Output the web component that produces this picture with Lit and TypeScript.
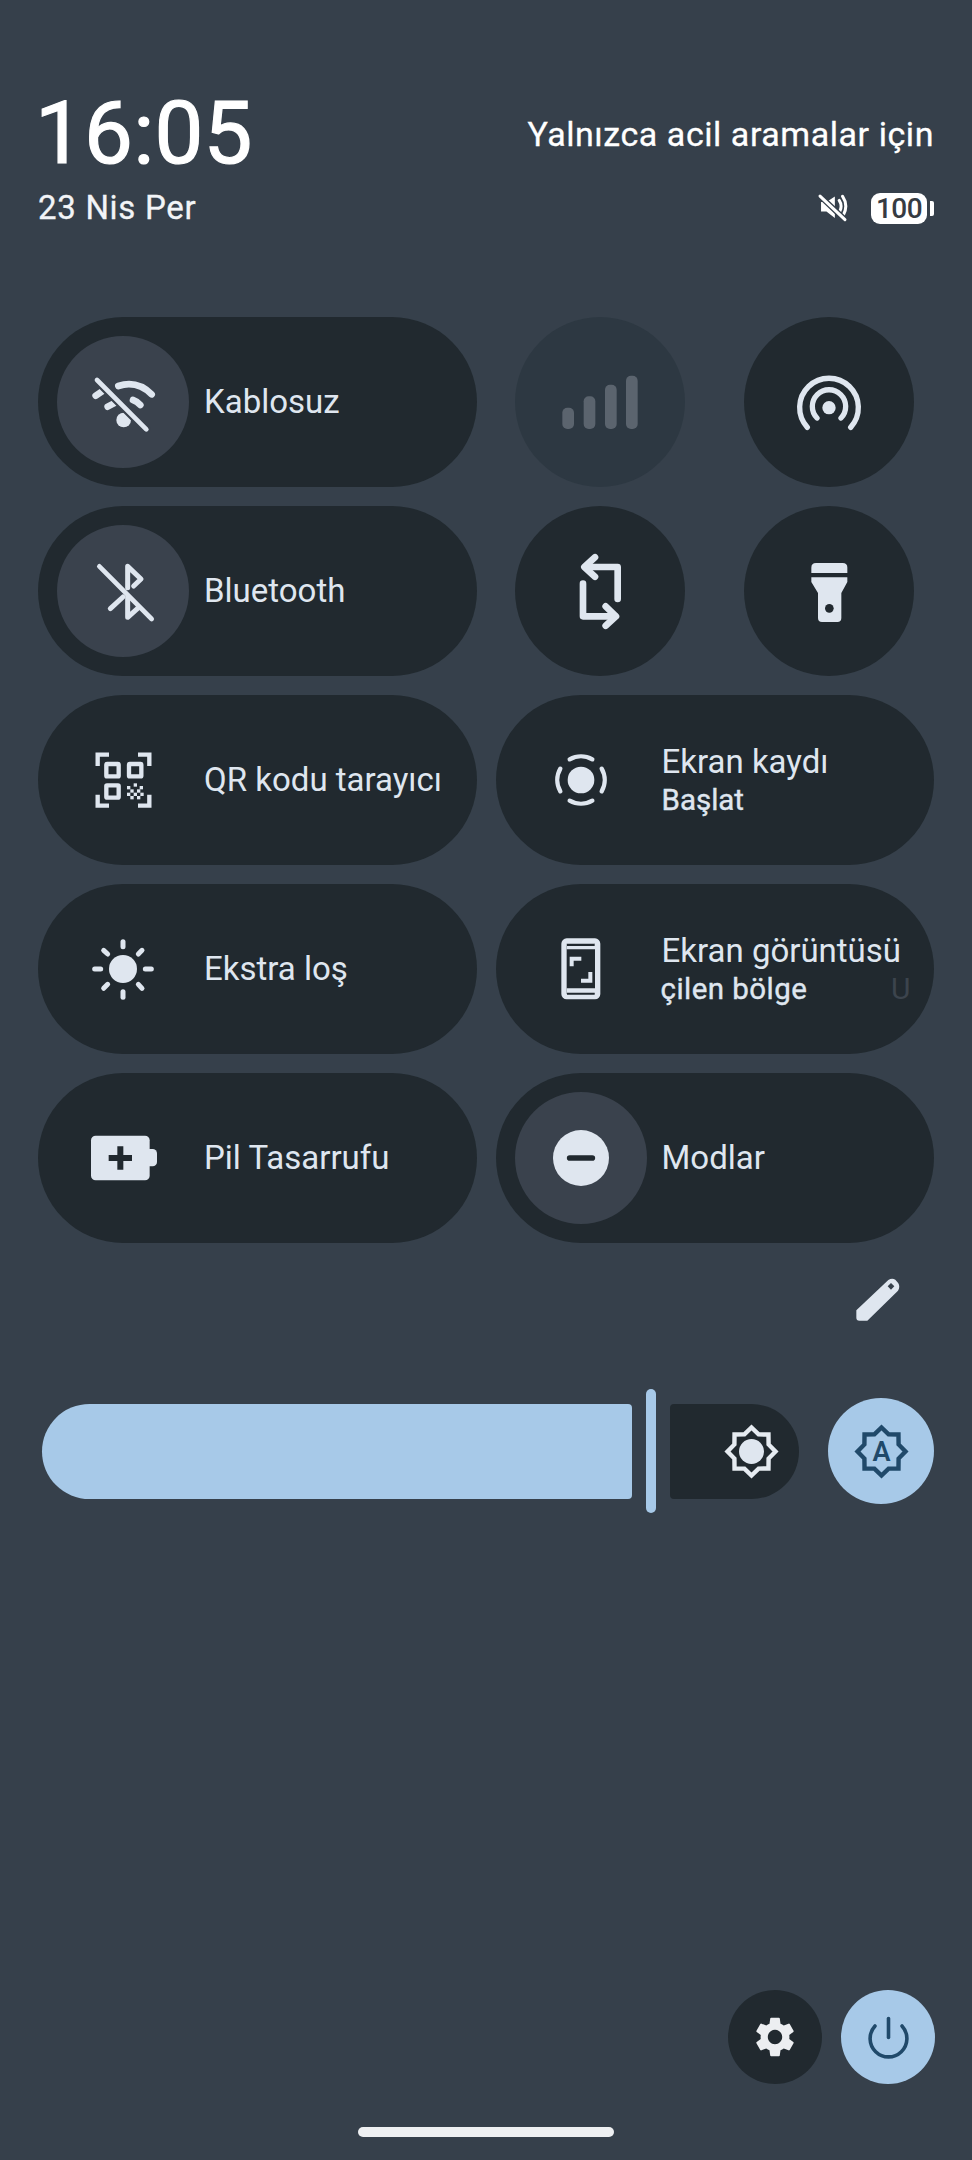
import { LitElement, html, svg, css } from 'lit';
import { customElement } from 'lit/decorators.js';

const FG = '#dfe6ef';
const TILE = '#21292f';
const RING = '#3a424d';
const NAVY = '#20496a';

// 8 pointed star outline used by the brightness icons
const starPoints = (() => {
  const pts: string[] = [];
  for (let i = 0; i < 16; i++) {
    const r = i % 2 === 0 ? 24 : 18.5;
    const a = (i * Math.PI) / 8;
    pts.push(`${(28.5 + r * Math.sin(a)).toFixed(2)},${(28.5 - r * Math.cos(a)).toFixed(2)}`);
  }
  return pts.join(' ');
})();

const glyph = (vb: string, body: unknown) => html`<svg class="ico" viewBox=${vb} fill="none" stroke-linecap="round" stroke-linejoin="round">${body}</svg>`;

const icons = {
  wifiOff: glyph('218 216 180 180', svg`
    <g stroke=${FG} stroke-width="20">
      <path d="M294 258Q350 240 394 283" /><path d="M226 287L248 272" /><path d="M262 320L285 308" /><path d="M338 300Q350 304 360 315" />
    </g>
    <circle cx="310" cy="360" r="22" fill=${FG} />
    <path d="M230 240L378 388" stroke=${RING} stroke-width="27" />
    <path d="M230 240L378 388" stroke=${FG} stroke-width="14" />`),
  btOff: glyph('218 782 180 180', svg`
    <g stroke=${FG} stroke-width="15">
      <path d="M322 862V798L362 836L340 857" /><path d="M270 925L308 890" /><path d="M322 890V951L352 924" />
    </g>
    <path d="M237 798L394 956" stroke=${FG} stroke-width="14" />`),
  signal: glyph('243 215 180 180', svg`
    <g fill="#5b646e">
      <rect x="220" y="322" width="35" height="64" rx="15" /><rect x="284" y="288" width="35" height="98" rx="15" />
      <rect x="348" y="253" width="35" height="133" rx="15" /><rect x="411" y="226" width="35" height="160" rx="15" />
    </g>`),
  hotspot: glyph('928 215 180 180', svg`
    <circle cx="1018" cy="322" r="20" fill=${FG} />
    <g stroke=${FG} stroke-width="16">
      <path d="M982 353A50 50 0 1 1 1054 353" /><path d="M953 381A88 88 0 1 1 1083 381" />
    </g>`),
  rotate: glyph('243 782 180 180', svg`
    <g stroke=${FG} stroke-width="20">
      <path d="M318 771L286 800L318 829" /><path d="M290 800H386V896" />
      <path d="M282 850V948H378" /><path d="M350 918L381 948L350 976" />
    </g>`),
  torch: glyph('928 782 180 180', svg`
    <path d="M965 818V802Q965 788 979 788H1059Q1073 788 1073 802V818Z" fill=${FG} />
    <path d="M965 831H1073V845L1055 878V953Q1055 965 1043 965H997Q985 965 985 953V878L965 845Z" fill=${FG} />
    <circle cx="1019" cy="924" r="13" fill=${TILE} />`),
  qr: glyph('218 210 180 180', svg`
    <g stroke=${FG} stroke-width="13" stroke-linecap="butt" stroke-linejoin="miter">
      <path d="M232 258V224H266" /><path d="M353 224H387V258" /><path d="M232 344V377H266" /><path d="M387 344V377H353" />
      <rect x="258" y="252" width="37" height="37" rx="2" /><rect x="326" y="252" width="37" height="37" rx="2" /><rect x="258" y="316" width="37" height="37" rx="2" />
    </g>
    <g fill=${FG}>
      <rect x="320" y="318" width="10" height="10" /><rect x="340" y="310" width="10" height="10" /><rect x="358" y="318" width="10" height="10" />
      <rect x="330" y="328" width="10" height="10" /><rect x="350" y="328" width="10" height="10" /><rect x="320" y="338" width="10" height="10" />
      <rect x="340" y="338" width="10" height="10" /><rect x="360" y="338" width="10" height="10" /><rect x="330" y="348" width="10" height="10" /><rect x="350" y="348" width="10" height="10" />
    </g>`),
  dim: glyph('220 777 180 180', svg`
    <circle cx="310" cy="867" r="42" fill=${FG} />
    <g stroke=${FG} stroke-width="15">
      <path d="M310 785V800" /><path d="M310 935V952" /><path d="M225 867H243" /><path d="M377 867H395" />
      <path d="M252 811L264 822" /><path d="M367 811L356 822" /><path d="M252 925L264 913" /><path d="M367 925L356 913" />
    </g>`),
  record: glyph('184 210 180 180', svg`
    <circle cx="274" cy="300" r="40" fill=${FG} />
    <g stroke=${FG} stroke-width="13">
      <path d="M240 238A68 68 0 0 1 308 238" /><path d="M240 362A68 68 0 0 0 308 362" />
      <path d="M212 266A68 68 0 0 0 212 334" /><path d="M336 266A68 68 0 0 1 336 334" />
    </g>`),
  screenshot: glyph('184 777 180 180', svg`
    <rect x="223" y="783" width="101" height="167" rx="8" stroke=${FG} stroke-width="16" />
    <path d="M231 800H316M231 933H316" stroke=${FG} stroke-width="16" stroke-linecap="butt" />
    <path d="M232 795H315M232 941H315" stroke=${TILE} stroke-width="6" stroke-linecap="butt" />
    <g stroke=${FG} stroke-width="12" stroke-linecap="butt" stroke-linejoin="miter">
      <path d="M275 836H246V859" /><path d="M302 876V902H274" />
    </g>`),
  saver: glyph('218 205 180 180', svg`
    <rect x="375" y="268" width="35" height="52" rx="13" fill=${FG} />
    <rect x="212" y="228" width="176" height="134" rx="14" fill=${FG} />
    <path d="M265 295H335M300 260V330" stroke=${TILE} stroke-width="18" stroke-linecap="butt" />`),
  modes: glyph('184 204 180 180', svg`
    <circle cx="274" cy="294" r="84" fill=${FG} />
    <path d="M240 294H308" stroke=${TILE} stroke-width="17" />`),
};

type Tile = { label: string; sub?: string; ghost?: string; icon: unknown; ring?: boolean };

const row3: Tile = { label: 'QR kodu tarayıcı', icon: icons.qr };
const row3b: Tile = { label: 'Ekran kaydı', sub: 'Başlat', icon: icons.record };
const row4: Tile = { label: 'Ekstra loş', icon: icons.dim };
const row4b: Tile = { label: 'Ekran görüntüsü', sub: 'çilen bölge', ghost: 'U', icon: icons.screenshot };
const row5: Tile = { label: 'Pil Tasarrufu', icon: icons.saver };
const row5b: Tile = { label: 'Modlar', icon: icons.modes, ring: true };

@customElement('app-root')
export class AppRoot extends LitElement {
  static styles = css`
    :host {
      display: flex;
      flex-direction: column;
      box-sizing: border-box;
      width: 972px;
      height: 2160px;
      padding: 0 38px;
      background: #36404b;
      color: #dfe6ef;
      font-family: Roboto, "Noto Sans", sans-serif;
      overflow: hidden;
    }

    .header {
      height: 317px;
      display: flex;
      justify-content: space-between;
      color: #fff;
    }
    .clock {
      font-size: 87px;
      line-height: 87px;
      margin-top: 90px;
      margin-left: -3px;
      letter-spacing: 0.2px;
      -webkit-text-stroke: 1.2px currentColor;
    }
    .date {
      font-size: 33px;
      line-height: 40px;
      margin-top: 11px;
      letter-spacing: 0.7px;
      color: #f2f4f7;
      -webkit-text-stroke: 0.3px currentColor;
    }
    .status {
      display: flex;
      flex-direction: column;
      align-items: flex-end;
    }
    .carrier {
      font-size: 34px;
      line-height: 40px;
      margin-top: 114px;
      letter-spacing: 0.55px;
      -webkit-text-stroke: 0.3px currentColor;
    }
    .indicators {
      display: flex;
      align-items: center;
      gap: 22px;
      margin-top: 38px;
    }
    .mute { width: 32px; height: 32px; }
    .battery { display: flex; align-items: center; gap: 3px; }
    .battery-body {
      width: 56px;
      height: 31px;
      border-radius: 9px;
      background: #fff;
      color: #363b42;
      font-size: 28px;
      font-weight: 500;
      line-height: 31px;
      letter-spacing: -0.5px;
      text-align: center;
    }
    .battery-nub { width: 4px; height: 15px; background: #fff; border-radius: 0 2px 2px 0; }

    .grid {
      display: grid;
      grid-template-columns: repeat(4, 1fr);
      grid-auto-rows: 170px;
      gap: 19px;
    }
    .tile {
      grid-column: span 2;
      display: flex;
      align-items: center;
      padding: 0 23px 0 19px;
      border-radius: 85px;
      background: #21292f;
    }
    .ico-wrap {
      flex: none;
      width: 132px;
      height: 132px;
      border-radius: 50%;
      display: flex;
      align-items: center;
      justify-content: center;
    }
    .ico-wrap.ring { background: #3a424d; }
    .ico { width: 60px; height: 60px; overflow: visible; }
    .text { flex: 1; min-width: 0; margin-left: 15px; }
    .label { font-size: 33px; line-height: 40px; white-space: nowrap; }
    .sub {
      display: flex;
      justify-content: space-between;
      font-size: 29.5px;
      line-height: 36px;
      white-space: nowrap;
      -webkit-text-stroke: 0.4px currentColor;
    }
    .sub.marquee { margin-left: -1px; letter-spacing: 0.45px; }
    .ghost { color: #3c444d; font-size: 30px; -webkit-text-stroke: 0; }
    .round {
      justify-self: center;
      width: 170px;
      border-radius: 50%;
      background: #21292f;
      display: flex;
      align-items: center;
      justify-content: center;
    }
    .round.off { background: #2d3842; }

    .edit { display: flex; justify-content: flex-end; padding: 35px 34px 0 0; }
    .pencil { width: 44px; height: 44px; }

    .brightness {
      display: flex;
      align-items: center;
      height: 124px;
      margin-top: 67px;
      padding-left: 4px;
    }
    .fill {
      flex: 1;
      height: 95px;
      background: #a7c9e8;
      border-radius: 47.5px 4px 4px 47.5px;
    }
    .thumb { width: 10px; height: 124px; margin: 0 14px; border-radius: 5px; background: #a7c9e8; }
    .rest {
      width: 129px;
      height: 95px;
      box-sizing: border-box;
      padding-right: 19px;
      display: flex;
      align-items: center;
      justify-content: flex-end;
      border-radius: 4px 47.5px 47.5px 4px;
      background: #21292f;
    }
    .star { width: 57px; height: 57px; }
    .auto {
      width: 106px;
      height: 106px;
      margin-left: 29px;
      border-radius: 50%;
      background: #a7c9e8;
      display: flex;
      align-items: center;
      justify-content: center;
    }
    .auto text { font-family: Roboto, sans-serif; font-size: 27px; font-weight: 600; }

    .footer { margin: auto -1px 0 0; display: flex; justify-content: flex-end; gap: 19px; }
    .action {
      width: 94px;
      height: 94px;
      border-radius: 50%;
      display: flex;
      align-items: center;
      justify-content: center;
      background: #21292f;
    }
    .action.power { background: #a7c9e8; }
    .gear { width: 48px; height: 48px; }
    .power-ico { width: 57px; height: 57px; }
    .home {
      align-self: center;
      width: 256px;
      height: 10px;
      margin: 43px 0 23px;
      border-radius: 5px;
      background: #eef0f2;
    }
  `;

  private tile(t: Tile) {
    return html`
      <div class="tile">
        <div class="ico-wrap ${t.ring ? 'ring' : ''}">${t.icon}</div>
        <div class="text">
          <div class="label">${t.label}</div>
          ${t.sub ? html`<div class="sub ${t.ghost ? 'marquee' : ''}"><span>${t.sub}</span>${t.ghost ? html`<span class="ghost">${t.ghost}</span>` : ''}</div>` : ''}
        </div>
      </div>
    `;
  }

  render() {
    return html`
      <div class="header">
        <div>
          <div class="clock">16:05</div>
          <div class="date">23 Nis Per</div>
        </div>
        <div class="status">
          <div class="carrier">Yalnızca acil aramalar için</div>
          <div class="indicators">
            <svg class="mute" viewBox="115 75 95 95" fill="none" stroke-linecap="round">
              <path d="M127 105H143L168 88V152L143 133H127Z" fill="#fff" />
              <path d="M181 100Q191 115 183 132M191 88Q209 115 193 144" stroke="#fff" stroke-width="9" />
              <path d="M124 87L198 157" stroke="#36404b" stroke-width="17" />
              <path d="M124 87L198 157" stroke="#fff" stroke-width="9" />
            </svg>
            <div class="battery">
              <div class="battery-body">100</div>
              <div class="battery-nub"></div>
            </div>
          </div>
        </div>
      </div>

      <div class="grid">
        ${this.tile({ label: 'Kablosuz', icon: icons.wifiOff, ring: true })}
        <div class="round off">${icons.signal}</div>
        <div class="round">${icons.hotspot}</div>
        ${this.tile({ label: 'Bluetooth', icon: icons.btOff, ring: true })}
        <div class="round">${icons.rotate}</div>
        <div class="round">${icons.torch}</div>
        ${this.tile(row3)}${this.tile(row3b)}
        ${this.tile(row4)}${this.tile(row4b)}
        ${this.tile(row5)}${this.tile(row5b)}
      </div>

      <div class="edit">
        <svg class="pencil" viewBox="888 55 132 132">
          <path fill-rule="evenodd" fill="#dfe6ef" d="M985 61Q996 54 1006 60L1015 71Q1021 82 1014 93L922 183H898Q889 183 889 174V152ZM993 70L983 80L993 90L1003 80Z" />
        </svg>
      </div>

      <div class="brightness">
        <div class="fill"></div>
        <div class="thumb"></div>
        <div class="rest">
          <svg class="star" viewBox="0 0 57 57" fill="none">
            <polygon points=${starPoints} stroke="#e6ebf1" stroke-width="4.4" />
            <circle cx="28.5" cy="28.5" r="12.5" fill="#dfe6ef" />
          </svg>
        </div>
        <div class="auto">
          <svg class="star" viewBox="0 0 57 57" fill="none">
            <polygon points=${starPoints} stroke=${NAVY} stroke-width="4.4" />
            <text x="28.5" y="38" text-anchor="middle" fill=${NAVY}>A</text>
          </svg>
        </div>
      </div>

      <div class="footer">
        <div class="action">
          <svg class="gear" viewBox="0 0 24 24">
            <path fill="#eceef1" d="M19.14 12.94c.04-.3.06-.61.06-.94 0-.32-.02-.64-.07-.94l2.03-1.58a.49.49 0 0 0 .12-.61l-1.92-3.32a.488.488 0 0 0-.59-.22l-2.39.96c-.5-.38-1.03-.7-1.62-.94l-.36-2.54a.484.484 0 0 0-.48-.41h-3.84c-.24 0-.43.17-.47.41l-.36 2.54c-.59.24-1.13.57-1.62.94l-2.39-.96c-.22-.08-.47 0-.59.22L2.74 8.87c-.12.21-.08.47.12.61l2.03 1.58c-.05.3-.09.63-.09.94s.02.64.07.94l-2.03 1.58a.49.49 0 0 0-.12.61l1.92 3.32c.12.22.37.29.59.22l2.39-.96c.5.38 1.03.7 1.62.94l.36 2.54c.05.24.24.41.48.41h3.84c.24 0 .44-.17.47-.41l.36-2.54c.59-.24 1.13-.56 1.62-.94l2.39.96c.22.08.47 0 .59-.22l1.92-3.32c.12-.22.07-.47-.12-.61l-2.01-1.58zM12 15.6c-1.98 0-3.6-1.62-3.6-3.6s1.62-3.6 3.6-3.6 3.6 1.62 3.6 3.6-1.62 3.6-3.6 3.6z" />
          </svg>
        </div>
        <div class="action power">
          <svg class="power-ico" viewBox="-28.5 -28.5 57 57" fill="none" stroke=${NAVY} stroke-width="3.6" stroke-linecap="round">
            <path d="M0 -19V0" />
            <path d="M-13.5 -11.5A18.4 18.4 0 1 0 13.5 -11.5" />
          </svg>
        </div>
      </div>
      <div class="home"></div>
    `;
  }
}
